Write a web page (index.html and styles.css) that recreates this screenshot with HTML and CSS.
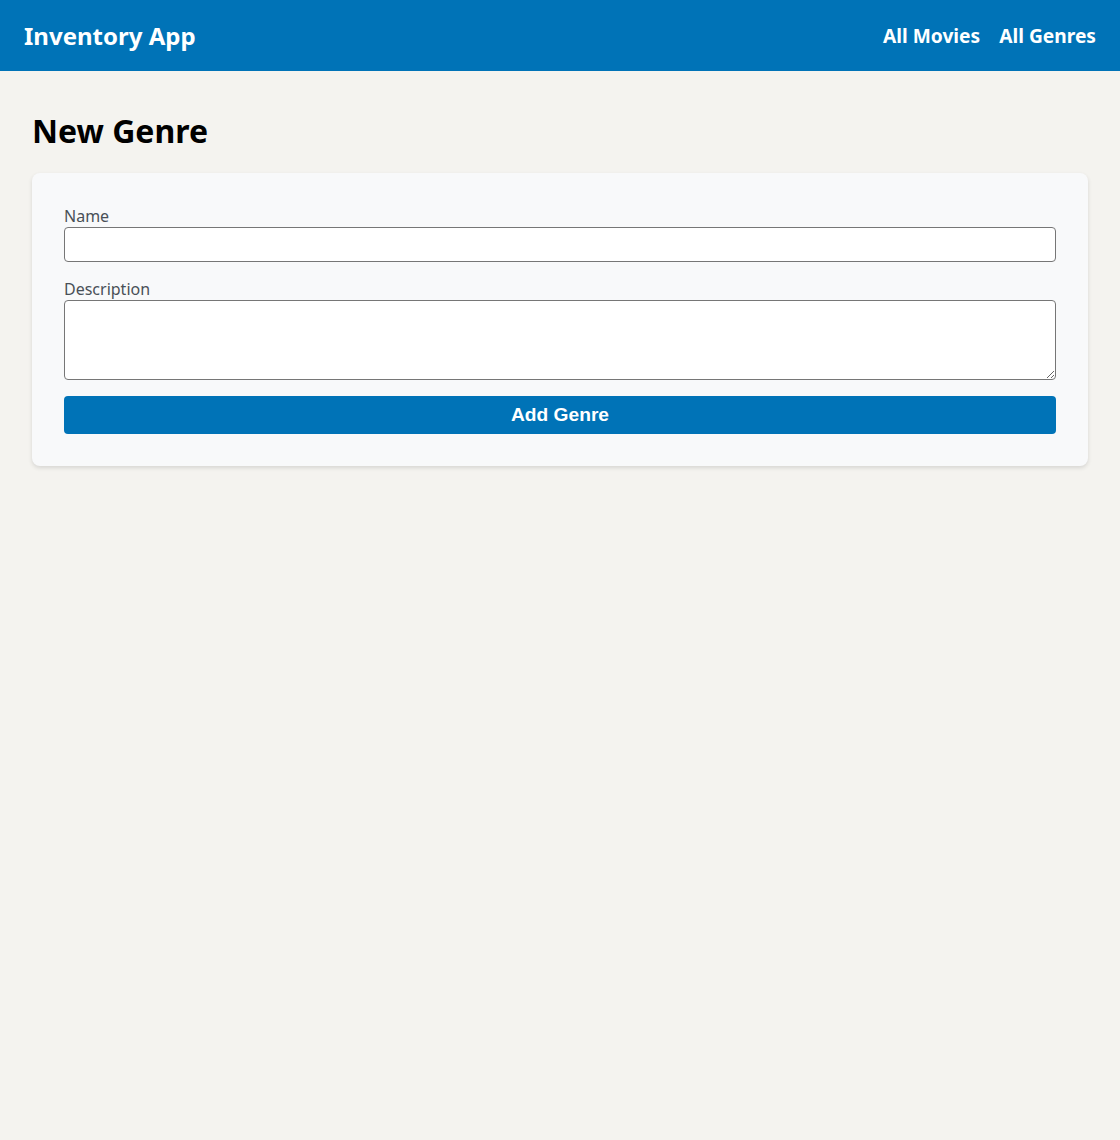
FILE: index.html
```html
<!DOCTYPE html>
<html lang="en">
<head>
<meta charset="utf-8">
<title>New Genre</title>
<link rel="stylesheet" href="styles.css">
</head>
<body>
<header class="topbar">
  <a class="brand" href="#">Inventory App</a>
  <nav class="nav">
    <a href="#">All Movies</a>
    <a href="#">All Genres</a>
  </nav>
</header>
<main class="main">
  <h1 class="title">New Genre</h1>
  <form class="card">
    <div class="field">
      <label for="name">Name</label>
      <input id="name" type="text" class="input">
    </div>
    <div class="field">
      <label for="desc">Description</label>
      <textarea id="desc" class="input textarea"></textarea>
    </div>
    <button type="submit" class="btn">Add Genre</button>
  </form>
</main>
</body>
</html>
```
FILE: styles.css
```css
* { box-sizing: border-box; }
html, body { margin: 0; padding: 0; }
body {
  background: #f4f3ef;
  font-family: "Noto Sans", "Open Sans", sans-serif;
  color: #000;
  min-height: 1140px;
}
.topbar {
  height: 71px;
  background: #0073b7;
  display: flex;
  align-items: center;
  justify-content: space-between;
  padding: 0 24px;
}
.brand {
  color: #fff;
  text-decoration: none;
  font-weight: 700;
  font-size: 24px;
}
.nav { display: flex; gap: 19px; }
.nav a {
  color: #fff;
  text-decoration: none;
  font-weight: 700;
  font-size: 19.2px;
}
.main { padding: 0 32px; }
.title {
  margin: 0;
  padding-top: 38px;
  font-size: 32px;
  line-height: 44px;
  font-weight: 700;
  margin-bottom: 20px;
}
.card {
  background: #f8f9fa;
  border-radius: 8px;
  box-shadow: 0 2px 4px rgba(0,0,0,0.12);
  padding: 32px;
  display: flex;
  flex-direction: column;
  gap: 16px;
}
.field { display: flex; flex-direction: column; }
.field label {
  font-size: 16px;
  line-height: 22px;
  color: #495057;
}
.input {
  display: block;
  width: 100%;
  height: 35px;
  border: 1px solid #767676;
  border-radius: 4px;
  background: #fff;
  font-family: inherit;
  font-size: 16px;
  margin: 0;
}
.textarea { height: 80px; }
.btn {
  height: 38px;
  border: none;
  border-radius: 4px;
  background: #0073b7;
  color: #fff;
  font-family: "Liberation Sans", Arial, sans-serif;
  font-weight: 700;
  font-size: 19.2px;
  cursor: pointer;
}
```
